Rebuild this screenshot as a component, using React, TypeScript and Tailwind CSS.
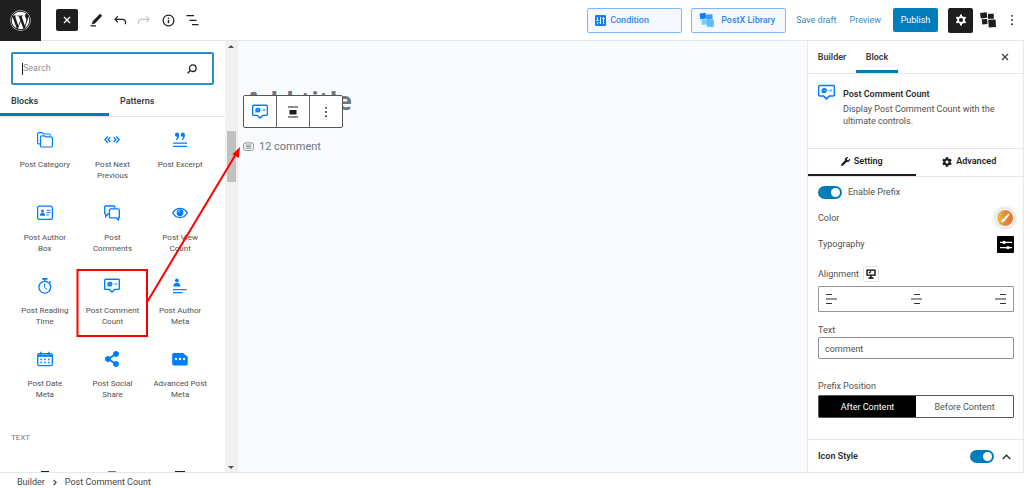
import React, { useState } from 'react';
import { FaWordpress, FaWrench, FaCog, FaShareAlt } from 'react-icons/fa';
import { clsx } from 'clsx';

const CategoryIcon = () => (
  <svg viewBox="0 0 16 16" className="h-4 w-4" fill="none" stroke="currentColor" strokeWidth="1.2">
    <path d="M3.300 12H2a1.400 1.400 0 0 1-1.400-1.400V2A1.400 1.400 0 0 1 2 .600h3l1.500 1.400H12A1.400 1.400 0 0 1 13.400 3.400v.400" />
    <path d="M3.500 13.500V5.200a1.400 1.400 0 0 1 1.400-1.400h2.400l1.400 1h5.300a1.400 1.400 0 0 1 1.400 1.400v7.400a1.400 1.400 0 0 1-1.400 1.400H4.900a1.400 1.400 0 0 1-1.400-1.500z" />
  </svg>
);

const NextPrevIcon = () => (
  <svg viewBox="0 0 16 16" className="h-4 w-4" fill="none" stroke="currentColor" strokeWidth="1.3">
    <path d="M3.700 4.500.9 7.600l2.800 3.100M6.300 5.200 4.100 7.600l2.200 2.400M12.300 4.500l2.800 3.100-2.800 3.100M9.700 5.200l2.200 2.400L9.700 10" />
  </svg>
);

const ExcerptIcon = () => (
  <svg viewBox="0 0 16 16" className="h-4 w-4" fill="currentColor">
    <path d="M3 2.500A2 2 0 0 1 7 2.400c.3 2.700-.8 4.900-2.600 5.800l-.6-.8c.9-.6 1.300-1.500 1.400-2.700A2 2 0 0 1 3 2.500zM8.800 2.500a2 2 0 0 1 4-.1c.3 2.700-.8 4.900-2.600 5.800l-.6-.8c.9-.6 1.300-1.500 1.400-2.700a2 2 0 0 1-2.200-2.200z" />
    <path d="M1 10.500h14v1.200H1zM1 13.700h14v1.200H1z" />
  </svg>
);

const AuthorBoxIcon = () => (
  <svg viewBox="0 0 16 16" className="h-4 w-4" fill="none" stroke="currentColor">
    <rect x=".6" y="1.100" width="14.800" height="13.300" rx="1.800" strokeWidth="1.300" />
    <circle cx="5.500" cy="5.900" r="1.500" fill="currentColor" stroke="none" />
    <path d="M2.900 10.800c0-2 1-3 2.600-3s2.600 1 2.600 3z" fill="currentColor" stroke="none" />
    <path d="M9.500 5.300h4M9.500 7.600h4M9.500 9.900h2.500" />
  </svg>
);

const CommentsIcon = () => (
  <svg viewBox="0 0 16 16" className="h-4 w-4" fill="none" stroke="currentColor" strokeWidth="1.300">
    <path d="M5.500 9H4l-2.300 2.600V9.300L.7 8.500V2A.9.9 0 0 1 1.600 1h8.300a.9.9 0 0 1 .9.9v1.600" />
    <path d="M6.400 3.900h8a.9.9 0 0 1 .9.900v8.100h-.9v2l-2.200-2H6.400a.9.900 0 0 1-.9-.9V4.800a.9.900 0 0 1 .9-.9z" />
  </svg>
);

const ViewIcon = () => (
  <svg viewBox="0 0 16 16" className="h-4 w-4" fill="none" stroke="currentColor" strokeWidth="1.300">
    <path d="M.7 8C4 1.800 12 1.800 15.300 8 12 14 4 14 .7 8z" />
    <circle cx="8" cy="7.700" r="3.400" fill="currentColor" stroke="none" />
    <path d="M6.300 7.200a1.900 1.900 0 0 1 1.500-1.400" stroke="#fff" strokeWidth="1" />
  </svg>
);

const ReadingIcon = () => (
  <svg viewBox="0 0 16 16" className="h-4 w-4" fill="none" stroke="currentColor" strokeWidth="1.300">
    <circle cx="7.800" cy="9.200" r="5.900" />
    <path d="M7.600 5.700v3.800l2.300 2" strokeWidth="1" />
    <path d="M5.200.9h5.300M12.500 3.300l1.200 1.200" strokeWidth="1.600" />
    <path d="M7.800 1v2" />
  </svg>
);

const CommentCountIcon = ({ className = 'h-4 w-4' }: { className?: string }) => (
  <svg viewBox="0 0 16 16" className={className} fill="none" stroke="currentColor">
    <path d="M1.900 1.300h12.200a1.300 1.300 0 0 1 1.300 1.300v7.500a1.300 1.300 0 0 1-1.300 1.300h-3.400L8 14l-2.700-2.600H1.900A1.300 1.300 0 0 1 .6 10.100V2.600a1.300 1.300 0 0 1 1.300-1.300z" strokeWidth="1.400" />
    <path d="M6 3.700a2.600 2.400 0 1 1-1.200 4.600l-1.500.5.400-1.300A2.600 2.400 0 0 1 6 3.700z" fill="currentColor" stroke="none" />
    <path d="M4.600 6.100h2.800" stroke="#fff" strokeWidth=".4" />
    <path d="M9.300 6.200h1.500M11.400 5.500h1.700v1.300h-1.700z" strokeWidth=".5" />
  </svg>
);

const AuthorMetaIcon = () => (
  <svg viewBox="0 0 16 16" className="h-4 w-4" fill="currentColor">
    <circle cx="4.900" cy="2.500" r="1.900" />
    <path d="M1.300 8.600c.1-2 .8-3 2.200-3.500h2.800c1.400.5 2.100 1.500 2.200 3.500zM1 11h13.500v1.200H1zM1 14.100h9.500v1.200H1z" />
  </svg>
);

const DateIcon = () => (
  <svg viewBox="0 0 16 16" className="h-4 w-4" fill="none" stroke="currentColor">
    <rect x=".7" y="2.700" width="14.600" height="12" rx="1.400" strokeWidth="1.300" />
    <path d="M.7 4.700h14.600" strokeWidth="2.200" />
    <path d="M3.900.8v3M12 .8v3" strokeWidth="1.400" />
    <path d="M3.400 8.500H5M7.200 8.500h1.600M11 8.500h1.600M3.400 11.600H5M7.200 11.600h1.600M11 11.600h1.600" strokeWidth="1.500" />
  </svg>
);

const AdvancedMetaIcon = () => (
  <svg viewBox="0 0 16 16" className="h-4 w-4">
    <path d="M1.500 2H11l4.700 3.800v7.200a1.500 1.500 0 0 1-1.500 1.500H2A2 2 0 0 1 .2 12.500v-9A1.500 1.500 0 0 1 1.500 2z" fill="currentColor" />
    <g fill="#fff">
      <circle cx="4" cy="8" r="1.200" />
      <circle cx="8" cy="8" r="1.200" />
      <circle cx="12" cy="8" r="1.200" />
    </g>
  </svg>
);

const BLOCKS = [
  { name: 'Post Category', icon: <CategoryIcon /> },
  { name: 'Post Next\nPrevious', icon: <NextPrevIcon /> },
  { name: 'Post Excerpt', icon: <ExcerptIcon /> },
  { name: 'Post Author\nBox', icon: <AuthorBoxIcon /> },
  { name: 'Post\nComments', icon: <CommentsIcon /> },
  { name: 'Post View\nCount', icon: <ViewIcon /> },
  { name: 'Post Reading\nTime', icon: <ReadingIcon /> },
  { name: 'Post Comment\nCount', icon: <CommentCountIcon /> },
  { name: 'Post Author\nMeta', icon: <AuthorMetaIcon /> },
  { name: 'Post Date\nMeta', icon: <DateIcon /> },
  { name: 'Post Social\nShare', icon: <FaShareAlt className="h-4 w-[14px]" /> },
  { name: 'Advanced Post\nMeta', icon: <AdvancedMetaIcon /> },
];

const ALIGNMENTS = [
  { id: 'left', d: 'M0 1.500h6M0 6h11M0 10.500h6' },
  { id: 'center', d: 'M3 1.500h6M0 6h11M3 10.500h6' },
  { id: 'right', d: 'M5 1.500h6M0 6h11M5 10.500h6' },
];

const CloseIcon = ({ className }: { className: string }) => (
  <svg viewBox="0 0 8 8" className={className} fill="none" stroke="currentColor" strokeWidth="1.300">
    <path d="m1 1 6 6M7 1 1 7" />
  </svg>
);

const DotsIcon = () => (
  <svg viewBox="0 0 4 12" className="h-3 w-1" fill="currentColor">
    <circle cx="2" cy="1.800" r=".9" />
    <circle cx="2" cy="6" r=".9" />
    <circle cx="2" cy="10.200" r=".9" />
  </svg>
);

function Toggle({ label, checked, onChange }: { label: string; checked: boolean; onChange: () => void }) {
  return (
    <label className="flex items-center">
      <input type="checkbox" role="switch" aria-label={label} checked={checked} onChange={onChange} className="sr-only" />
      <span className={clsx('flex h-[13px] w-6 items-center rounded-full px-0.5', checked ? 'justify-end bg-[#007cba]' : 'bg-[#949494]')}>
        <span className="h-[9px] w-[9px] rounded-full bg-white" />
      </span>
    </label>
  );
}

function Header() {
  return (
    <header className="flex h-[41px] shrink-0 items-center border-b border-[#e4e5e7] bg-white text-[#1e1e1e]">
      <a href="#" aria-label="WordPress" className="flex h-[41px] w-[41px] items-center justify-center bg-[#1e1e1e] text-white">
        <FaWordpress className="h-[21px] w-[21px]" />
      </a>
      <div className="ml-[15px] flex items-center gap-2">
        <button aria-label="Close inserter" className="mr-0.5 flex h-[22px] w-[22px] items-center justify-center rounded-[2px] bg-[#1e1e1e] text-white">
          <CloseIcon className="h-2 w-2" />
        </button>
        <button aria-label="Tools">
          <svg viewBox="0 0 16 16" className="h-4 w-4" fill="currentColor">
            <path d="m12 1.800 2.200 2-7.300 7.700-3.200 1 1-3.200zM2.500 13.300h5.500v1.200H2.500z" />
          </svg>
        </button>
        <button aria-label="Undo">
          <svg viewBox="0 0 16 16" className="h-4 w-4" fill="none" stroke="currentColor" strokeWidth="1.200">
            <path d="M5.800 4.300 3 7.300l2.800 3M3 7.300h7.500a3 3 0 0 1 3 3v2" />
          </svg>
        </button>
        <button aria-label="Redo" className="text-[#c4c4c4]">
          <svg viewBox="0 0 16 16" className="h-4 w-4" fill="none" stroke="currentColor" strokeWidth="1.200">
            <path d="m10.200 4.300 2.800 3-2.800 3M13 7.300H5.500a3 3 0 0 0-3 3v2" />
          </svg>
        </button>
        <button aria-label="Details">
          <svg viewBox="0 0 16 16" className="h-4 w-4" fill="none" stroke="currentColor" strokeWidth="1.200">
            <circle cx="8.500" cy="8.500" r="5.400" />
            <path d="M8.500 7.800v3.500M8.500 5.500v1.300" strokeWidth="1.400" />
          </svg>
        </button>
        <button aria-label="List view">
          <svg viewBox="0 0 16 16" className="h-4 w-4" fill="none" stroke="currentColor" strokeWidth="1.300">
            <path d="M2.500 3.700H10M5.500 8.300h7M8 12.700h6.500" />
          </svg>
        </button>
      </div>

      <div className="ml-auto flex items-center">
        <button className="mr-[9px] flex h-[25px] w-[95px] items-center gap-1 rounded-[2px] border border-[#7cb8fb] bg-[#f5f9fe] pl-[7px] text-[9px] font-medium text-[#2b87f7]">
          <svg viewBox="0 0 11 11" className="h-[11px] w-[11px]">
            <rect width="11" height="11" rx="1" fill="#0a80ff" />
            <path d="M2.500 2v3.500M2.500 7v2M1.300 5.500h2.400M5.500 2v7M4.500 7.500l1 1.400M8.500 9V3M7.200 4l1.300-1.500L9.800 4" stroke="#fff" fill="none" strokeWidth=".9" />
          </svg>
          <span className="pt-px">Condition</span>
        </button>
        <button className="mr-[10px] flex h-[25px] w-[95px] items-center gap-1.5 rounded-[2px] border border-[#7cb8fb] bg-[#f5f9fe] pl-[7px] text-[9px] font-medium text-[#2b87f7]">
          <svg viewBox="0 0 16 16" className="h-4 w-4">
            <path d="m.6 1.600 6-.8.700 5.700-6 .7z" fill="#0a80ff" />
            <path d="m7.200 2.600 6.200-.4.300 5-6.500.300z" fill="#3f9bff" />
            <path d="M2.400 7.500 7.800 7.200l.3 5.400-5.300.300z" fill="#70d6ff" />
            <path d="m7.800 7.200 7.300.6-.6 7.400-6.900-.6z" fill="#5cbcff" />
          </svg>
          <span className="pt-px">PostX Library</span>
        </button>
        <button className="mr-[13px] pt-0.5 text-[9px] text-[#2f8fbf]">Save draft</button>
        <button className="mr-3 pt-0.5 text-[9px] text-[#2f8fbf]">Preview</button>
        <button className="mr-2.5 h-6 w-[45px] rounded-[2px] bg-[#007cba] pt-0.5 text-[9px] text-white">Publish</button>
        <button aria-label="Settings" className="mr-[7px] flex h-[25px] w-[25px] items-center justify-center rounded-[2px] bg-[#1e1e1e] text-white">
          <svg viewBox="0 0 12 12" className="h-3 w-3" fill="none" stroke="currentColor">
            <circle cx="6" cy="6" r="3" strokeWidth="1.900" />
            <path d="M6 .6v1.900M6 9.500v1.900M1.300 3.300l1.700 1M9 7.700l1.700 1M1.300 8.700l1.700-1M9 4.300l1.700-1" strokeWidth="2" />
          </svg>
        </button>
        <button aria-label="PostX" className="mr-3.5">
          <svg viewBox="0 0 16 16" className="h-4 w-4" fill="currentColor">
            <path d="m0 .9 6.700-.7.600 5.600-6.500.8zM8 1.700h5.800v5H8zM1.800 7.300l5.300-.4.400 5.200-5.200.3zM8.200 7.700l7.400-.2.400 7.500-7.200.5z" />
          </svg>
        </button>
        <button aria-label="Options" className="mr-2.5">
          <DotsIcon />
        </button>
      </div>
    </header>
  );
}

function Inserter() {
  return (
    <aside className="flex w-[238px] shrink-0 border-r border-[#e8eaeb] bg-white">
      <div className="flex min-w-0 flex-1 flex-col overflow-hidden">
        <div className="px-[11px] pt-[11px]">
          <label className="flex h-[33px] items-center rounded-[2px] border-2 border-[#2a8fc4] pr-[15px] pl-[9px]">
            <input type="text" placeholder="Search" aria-label="Search" className="h-3 w-full min-w-0 border-l border-[#1e1e1e] pt-px text-[9px] outline-none placeholder:text-[#8c8f94]" />
            <svg viewBox="0 0 10 10" className="h-2.5 w-2.5 shrink-0 text-[#1e1e1e]" fill="none" stroke="currentColor" strokeWidth="1.300">
              <circle cx="5.800" cy="4.200" r="3.300" />
              <path d="M3.400 6.500.6 9.200" />
            </svg>
          </label>
        </div>
        <div className="mt-0.5 flex h-[30px] shrink-0 border-b border-[#e4e6e8] text-[9px] font-semibold text-[#3c3c3c]">
          <button className="w-[109px] border-b-[3px] border-[#007cba] pt-1 pl-[11px] text-left">Blocks</button>
          <button className="flex-1 border-b-[3px] border-transparent pt-1 pl-[11px] text-left">Patterns</button>
        </div>
        <div className="grid auto-rows-[73px] grid-cols-3 px-[11px] pt-[7px]">
          {BLOCKS.map((block) => (
            <button key={block.name} className="flex flex-col items-center pt-2 text-[#007cff]">
              {block.icon}
              <span className="mt-[11px] text-[8px] leading-[11px] whitespace-pre-line text-[#505050]">{block.name}</span>
            </button>
          ))}
        </div>
        <h2 className="mt-[15px] shrink-0 px-[11px] text-[8px] leading-[14px] text-[#757575]">TEXT</h2>
        <div className="mt-[26px] grid shrink-0 grid-cols-3 px-[11px] text-[#1e1e1e]">
          <span className="mx-auto h-2 w-2 border-t-2 border-current" />
          <span className="mx-auto h-2 w-2 border-t-2 border-[#777]" />
          <span className="mx-auto h-2 w-2.5 border-t-2 border-current" />
        </div>
      </div>
      <div aria-hidden="true" className="flex w-3 flex-col items-center bg-[#f1f1f1] pt-1 pb-[3px]">
        <span className="border-x-[3px] border-b-[3px] border-x-transparent border-b-[#505050]" />
        <span className="mt-[83px] h-[51px] w-[9px] bg-[#c1c1c1]" />
        <span className="mt-auto border-x-[3px] border-t-[3px] border-x-transparent border-t-[#505050]" />
      </div>
    </aside>
  );
}

function Canvas() {
  return (
    <main className="min-w-0 flex-1 bg-[#f9fafd] pt-[40px] pl-[5px]">
      <div className="relative">
        <h1 className="pl-0.5 font-['Open_Sans',sans-serif] text-[25px] leading-[38px] font-bold text-[#6c7781]">Add title</h1>
        {/* Block toolbar sits over the title */}
        <div className="absolute top-[14px] left-0 flex h-[33px] w-[100px] divide-x divide-[#666] rounded-[2px] border border-[#555] bg-white text-[#1e1e1e]">
          <button aria-label="Post Comment Count" className="flex flex-1 items-center justify-center text-[#007cff]">
            <CommentCountIcon />
          </button>
          <button aria-label="Align" className="flex flex-1 items-center justify-center">
            <svg viewBox="0 0 10 12" className="h-3 w-2.5" fill="currentColor">
              <path d="M0 .6h10v1H0zM1.500 4h7v4.400h-7zM0 10.400h10v1H0z" />
            </svg>
          </button>
          <button aria-label="More" className="flex flex-1 items-center justify-center">
            <DotsIcon />
          </button>
        </div>
      </div>
      <p className="mt-[18px] flex items-center gap-[5px] text-[11px] leading-[18px] text-[#6c7781]">
        <svg viewBox="0 0 11 10" className="h-2.5 w-[11px]" fill="none" stroke="currentColor" strokeWidth=".8">
          <path d="M3 .9h5.500a2 2 0 0 1 2 2v3.500a2 2 0 0 1-2 2H3a2.300 2.300 0 0 1-2.400-2V3A2.200 2.200 0 0 1 3 .9z" />
          <path d="M2.800 3h5.500M2.800 4.600h5.500M2.800 6.200h5.500" />
        </svg>
        <span className="pt-px">12 comment</span>
      </p>
    </main>
  );
}

function Settings() {
  const [prefix, setPrefix] = useState(true);
  const [iconStyle, setIconStyle] = useState(true);
  const [text, setText] = useState('comment');
  const [position, setPosition] = useState('After Content');

  return (
    <aside className="flex w-[217px] shrink-0 flex-col border-x border-[#e6e8ea] bg-white text-[9px] text-[#505050]">
      <div className="flex h-[33px] shrink-0 items-stretch border-b border-[#e4e6e8] font-semibold text-[#3c3c3c]">
        <button className="w-12 border-b-[3px] border-transparent pt-1">Builder</button>
        <button className="w-[42px] border-b-[3px] border-[#007cba] pt-1">Block</button>
        <button aria-label="Close settings" className="mr-3.5 ml-auto">
          <CloseIcon className="h-2 w-2" />
        </button>
      </div>

      <section className="flex h-[75px] shrink-0 gap-2 border-b border-[#e4e6e8] pt-[10px] pl-2.5">
        <CommentCountIcon className="h-[17px] w-[17px] shrink-0 text-[#007cff]" />
        <div className="pt-px">
          <h2 className="leading-[18px] font-semibold text-[#2c2c2c]">Post Comment Count</h2>
          <p className="mr-4 leading-3">Display Post Comment Count with the ultimate controls.</p>
        </div>
      </section>

      <div className="flex h-7 shrink-0 border-b border-[#e4e6e8] font-semibold text-[#1e1e1e]">
        <button className="flex flex-1 items-center justify-center gap-1 border-b-2 border-[#1e1e1e]">
          <FaWrench className="h-[9px] w-[9px]" />
          <span className="pt-px">Setting</span>
        </button>
        <button className="flex flex-1 items-center justify-center gap-1 border-b-2 border-transparent">
          <FaCog className="h-2.5 w-2.5" />
          <span className="pt-px">Advanced</span>
        </button>
      </div>

      <div className="flex flex-col pt-[7px] pr-[9px] pl-2.5">
        <div className="flex h-4 items-center gap-1.5">
          <Toggle label="Enable Prefix" checked={prefix} onChange={() => setPrefix(!prefix)} />
          <span className="pt-0.5">Enable Prefix</span>
        </div>
        <div className="mt-[9px] flex h-[18px] items-center justify-between">
          <span className="pt-0.5">Color</span>
          <button aria-label="Pick color" className="flex h-[18px] w-[18px] items-center justify-center rounded-full border border-white bg-linear-to-r from-[#f6c033] via-[#dc8a4a] to-[#e87500] shadow-[0_0_5px_rgba(0,0,0,0.3)]">
            <svg viewBox="0 0 10 10" className="h-2.5 w-2.5" fill="#fff">
              <path d="M8.300.6c1-.3 1.500.5 1 1.300L6 6.300 4.200 4.800zM3.900 5.200l1.700 1.400C5.400 8.700 3 9.500.8 8.800c1.400-.4.900-3 3.100-3.600z" />
            </svg>
          </button>
        </div>
        <div className="mt-[9px] flex h-[17px] items-center justify-between">
          <span>Typography</span>
          <button aria-label="Typography settings" className="flex h-[17px] w-[17px] items-center justify-center rounded-[1px] bg-black">
            <svg viewBox="0 0 12 10" className="h-2.5 w-3" fill="#fff">
              <path d="M0 1.800h12V3H0zM0 7h12v1.200H0z" />
              <circle cx="4" cy="2.400" r="1.700" />
              <circle cx="8" cy="7.600" r="1.700" />
            </svg>
          </button>
        </div>
        <div className="mt-[13px] flex h-4 items-center gap-1">
          <span className="pt-0.5">Alignment</span>
          <button aria-label="Device" className="flex h-4 w-4 items-center justify-center rounded-[2px] border border-[#e4e4e4] text-black">
            <svg viewBox="0 0 10 10" className="h-2.5 w-2.5" fill="none" stroke="currentColor" strokeWidth="1.300">
              <path d="M1 1.200h8v5H1zM2.500 9h5M5 6v3M3 4l2-1.500" />
            </svg>
          </button>
        </div>
        <div className="mt-1 flex h-[26px] items-center justify-between rounded-[1px] border border-[#949494] px-[7px] text-[#333]">
          {ALIGNMENTS.map((item) => (
            <button key={item.id} aria-label={`Align ${item.id}`}>
              <svg viewBox="0 0 11 12" className="h-3 w-[11px]" stroke="currentColor" strokeWidth="1.200">
                <path d={item.d} />
              </svg>
            </button>
          ))}
        </div>
        <label htmlFor="prefix-text" className="mt-[11px] leading-[14px]">Text</label>
        <input
          id="prefix-text"
          type="text"
          value={text}
          onChange={(e) => setText(e.target.value)}
          className="h-[22px] rounded-[2px] border border-[#8c8f94] px-1.5 pt-px"
        />
        <span className="mt-5 leading-[14px]">Prefix Position</span>
        <div className="mt-0.5 flex h-[23px] rounded-[1px] border border-[#555]">
          {['After Content', 'Before Content'].map((option) => (
            <button
              key={option}
              onClick={() => setPosition(option)}
              className={clsx('flex-1 pt-0.5', position === option ? 'bg-black text-white' : 'bg-white')}
            >
              {option}
            </button>
          ))}
        </div>
      </div>

      <div className="mt-[21px] flex h-[34px] shrink-0 items-center border-t border-[#e4e6e8] pr-3 pl-2.5 text-[#2c2c2c]">
        <h3 className="mr-auto pt-px font-semibold">Icon Style</h3>
        <Toggle label="Icon Style" checked={iconStyle} onChange={() => setIconStyle(!iconStyle)} />
        <button aria-label="Collapse" className="ml-2">
          <svg viewBox="0 0 9 6" className="h-1.5 w-[9px]" fill="none" stroke="currentColor" strokeWidth="1.300">
            <path d="m.7 5 3.800-3.800L8.300 5" />
          </svg>
        </button>
      </div>
    </aside>
  );
}

export default function App() {
  return (
    <div className="relative flex h-screen flex-col overflow-hidden bg-white font-['Roboto','Open_Sans',sans-serif]">
      <Header />
      <div className="flex min-h-0 flex-1">
        <Inserter />
        <Canvas />
        <Settings />
      </div>
      <footer className="flex h-4 shrink-0 items-center gap-2 border-t border-[#e4e6e8] pt-1 pl-[17px] text-[9px] text-[#444]">
        <a href="#">Builder</a>
        <svg viewBox="0 0 4 7" className="h-[7px] w-1" fill="none" stroke="currentColor" strokeWidth="1.200">
          <path d="m.6.800 2.500 2.700L.6 6.200" />
        </svg>
        <span>Post Comment Count</span>
      </footer>

      {/* Callout from the block to the canvas */}
      <svg viewBox="0 0 250 350" className="pointer-events-none absolute top-0 left-0 h-[350px] w-[250px]" fill="none" stroke="#ff0000">
        <rect x="77.500" y="270" width="69.500" height="66" strokeWidth="2" />
        <path d="M146.500 303 236 154" strokeWidth="2" />
        <path d="m240 147-1.200 11-6.300-3.800z" fill="#ff0000" stroke="none" />
      </svg>
    </div>
  );
}
